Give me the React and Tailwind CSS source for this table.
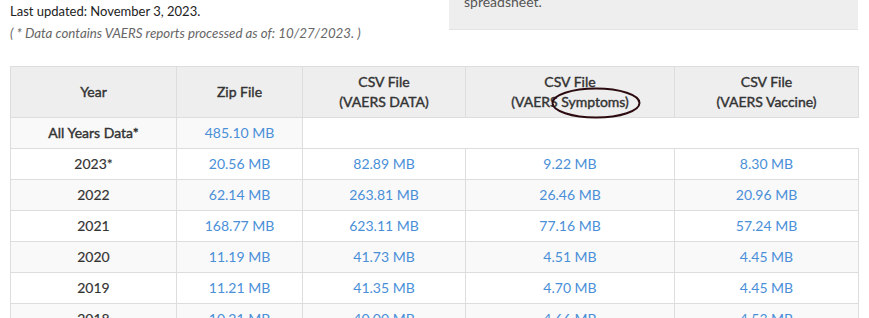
import React from "react";

const rows = [
  ["2023*", "20.56 MB", "82.89 MB", "9.22 MB", "8.30 MB"],
  ["2022", "62.14 MB", "263.81 MB", "26.46 MB", "20.96 MB"],
  ["2021", "168.77 MB", "623.11 MB", "77.16 MB", "57.24 MB"],
  ["2020", "11.19 MB", "41.73 MB", "4.51 MB", "4.45 MB"],
  ["2019", "11.21 MB", "41.35 MB", "4.70 MB", "4.45 MB"],
  ["2018", "10.21 MB", "40.00 MB", "4.66 MB", "4.53 MB"],
];

const th = "border border-[#ddd] py-[5px] font-normal [-webkit-text-stroke:0.4px_#333]";

export default function App() {
  return (
    <div className="bg-white w-[869px] h-[318px] overflow-hidden text-[14px] leading-[20px] text-[#333]" style={{ fontFamily: "Lato, 'Open Sans', sans-serif" }}>
      <div className="flex items-start pl-[10px]">
        <div className="w-[439px]">
          <div className="mt-[1px] text-[13px] leading-[20px] text-[#222]">Last updated: November 3, 2023.</div>
          <div className="mt-[2px] text-[13.3px] italic text-[#666]">( * Data contains VAERS reports processed as of: 10/27/2023. )</div>
        </div>
        <div className="w-[409px] mt-[-8px] bg-[#eee] border-b border-[#e3e3e3] pl-[15px] pb-[17px] text-[#555]">
          spreadsheet.
        </div>
      </div>
      <div className="relative ml-[10px] mt-[23px] w-[848px]">
        <table className="table-fixed border-collapse w-[848px] text-center">
          <colgroup>
            <col className="w-[166px]" />
            <col className="w-[126px]" />
            <col className="w-[163px]" />
            <col className="w-[209px]" />
            <col className="w-[184px]" />
          </colgroup>
          <thead>
            <tr className="bg-[#eee]">
              <th className={th}>Year</th>
              <th className={th}>Zip File</th>
              <th className={th}>CSV File<br />(VAERS DATA)</th>
              <th className={th}>CSV File<br />(VAERS Symptoms)</th>
              <th className={th}>CSV File<br />(VAERS Vaccine)</th>
            </tr>
          </thead>
          <tbody>
            <tr>
              <th className={th + " bg-[#f9f9f9]"}>All Years Data*</th>
              <td className="border border-[#ddd] py-[5px] bg-[#f9f9f9] text-[#4a8fd8]">485.10 MB</td>
              <td colSpan={3} className="border-y border-[#ddd] border-r-transparent py-[5px]"></td>
            </tr>
            {rows.map((r, i) => (
              <tr key={r[0]} className={i % 2 === 1 ? "bg-[#f9f9f9]" : "bg-white"}>
                <th className="border border-[#ddd] py-[5px] font-normal [-webkit-text-stroke:0.15px_#333]">{r[0]}</th>
                {r.slice(1).map((c, j) => (
                  <td key={j} className="border border-[#ddd] py-[5px] text-[#4a8fd8]">{c}</td>
                ))}
              </tr>
            ))}
          </tbody>
        </table>
        <svg className="absolute left-[540px] top-[20px]" width="92" height="34" viewBox="0 0 92 34">
          <ellipse cx="46" cy="17" rx="43.5" ry="14.5" fill="none" stroke="#2b0b10" strokeWidth="2" />
        </svg>
      </div>
    </div>
  );
}
